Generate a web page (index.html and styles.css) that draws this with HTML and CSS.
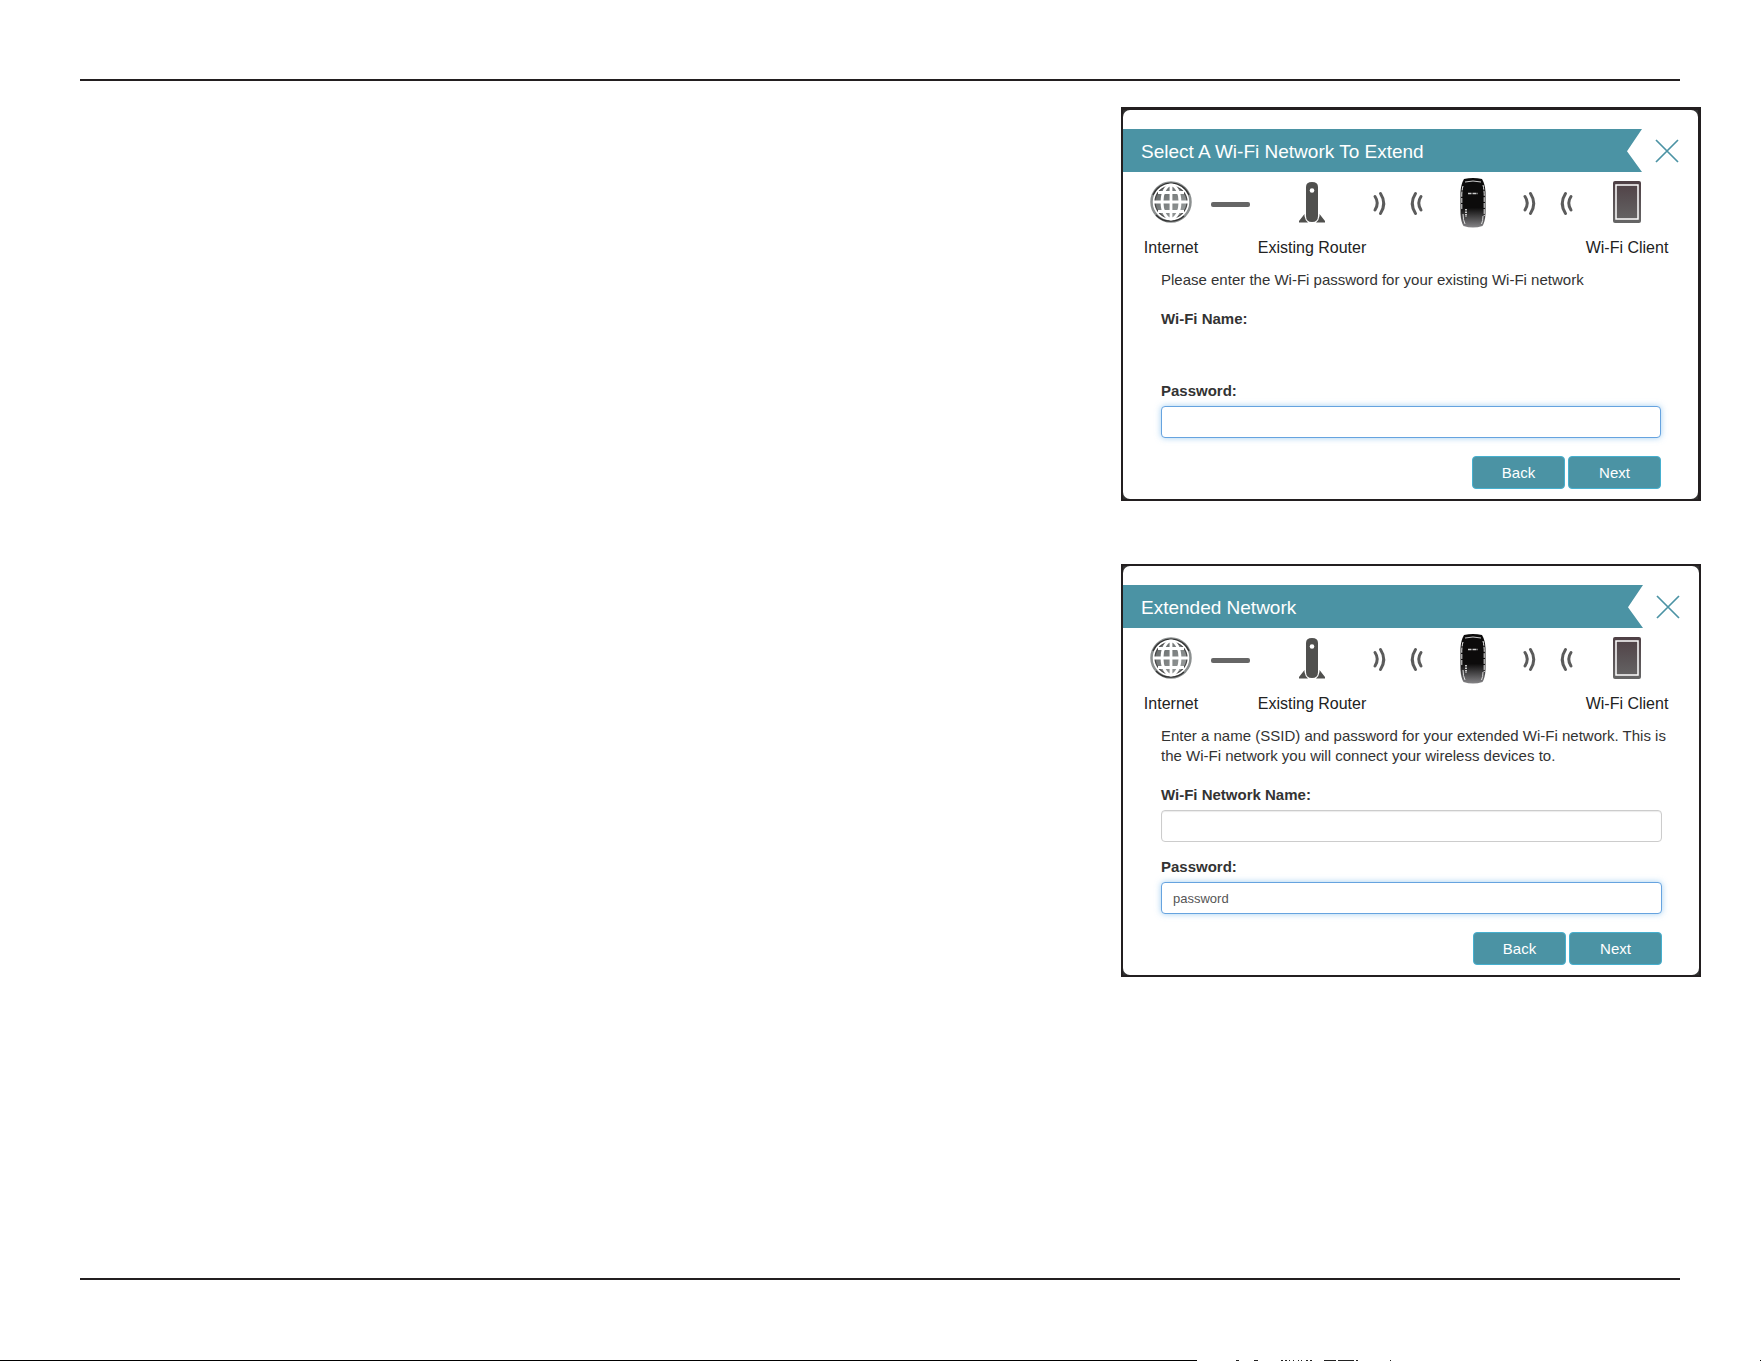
FILE: index.html
```html
<!DOCTYPE html>
<html lang="en">
<head>
    <meta charset="UTF-8">
    <title>Extender Setup</title>
    <link rel="stylesheet" href="styles.css">
</head>
<body>
    <!-- shared icons -->
    <svg class="symbols" aria-hidden="true">
        <linearGradient id="screen" x1="0" y1="0" x2="0" y2="1">
            <stop offset="0" stop-color="#4f4045"/>
            <stop offset="1" stop-color="#666"/>
        </linearGradient>
        <linearGradient id="shell" x1="0" y1="0" x2="0" y2="1">
            <stop offset="0.6" stop-color="#0c0b0b"/>
            <stop offset="1" stop-color="#858487"/>
        </linearGradient>
        <linearGradient id="sea" x1="0" y1="0" x2="1" y2="1">
            <stop offset="0" stop-color="#606464"/>
            <stop offset="1" stop-color="#a0a4a4"/>
        </linearGradient>
        <symbol id="globe" viewBox="0 0 42 50">
            <circle cx="21" cy="24" r="19.500" fill="#fff" stroke="#8b8f8f" stroke-width="2.500"/>
            <path d="M3 17A19.500 19.500 0 0 1 39 17M6 37A20 20 0 0 0 34 38" fill="none" stroke="#333" stroke-width="1.200"/>
            <circle cx="21" cy="24" r="16" fill="url(#sea)" stroke="#444" stroke-width="1.200"/>
            <g fill="none" stroke="#fff" stroke-width="2.800">
                <path d="M21 7V41M4 24H38M8 14.500H34M8 33.500H34"/>
                <ellipse cx="21" cy="24" rx="9" ry="17"/>
            </g>
        </symbol>
        <symbol id="cable" viewBox="0 0 58 50">
            <rect x="12" y="24" width="39" height="5" rx="2" fill="#666"/>
        </symbol>
        <symbol id="router" viewBox="0 0 28 50">
            <path d="M8 9Q8 4 14 4T20 9V38Q20 44 14 44T8 38Z" fill="#50504e"/>
            <circle cx="14" cy="12.500" r="2.300" fill="#fff"/>
            <path d="M6.500 36V38Q7 42 10 44.500H1V43ZM21.500 36V38Q21 42 18 44.500H27V43Z" fill="#50504e"/>
        </symbol>
        <symbol id="signal" viewBox="0 0 52 50">
            <g fill="none" stroke="#5b5b5b" stroke-width="3" stroke-linecap="round">
                <path d="M3 18.500Q7.500 25 3 32M8.500 15.500Q15 25.500 8.500 35.500"/>
                <path d="M49 18.500Q44.500 25 49 32M43.500 15.500Q37 25.500 43.500 35.500"/>
            </g>
        </symbol>
        <symbol id="extender" viewBox="0 0 26 50">
            <path d="M4 1Q13 -1 22 1Q25 6 25.500 14V36Q25 44 22.500 48Q13 51 3.500 48Q1 44 .5 36V14Q1 6 4 1Z" fill="url(#shell)"/>
            <path d="M5 4Q13 2 21 4" fill="none" stroke="#ccc" stroke-width="1"/>
            <path d="M3 8Q1.500 13 1.800 20V32M23 7Q24.500 13 24.200 20V38" fill="none" stroke="#eee" stroke-width="1" stroke-dasharray="5 1"/>
            <path d="M3 36Q3 42 5 46M23 38Q23 43 21.500 46" fill="none" stroke="#ddd" stroke-width="1"/>
            <path d="M8 15.500H18" stroke="#ccc" stroke-width="1.600" stroke-dasharray="3 .5 1 .5"/>
            <path d="M6 31V39" stroke="#fff" stroke-width="1.500" stroke-dasharray="1.500 1"/>
        </symbol>
        <symbol id="tablet" viewBox="0 0 30 50">
            <rect x="1" y="3" width="28" height="42" rx="2" fill="url(#screen)"/>
            <rect x="4" y="7" width="22" height="34" fill="none" stroke="#fff" stroke-width="1.500"/>
        </symbol>
        <symbol id="close" viewBox="0 0 24 24">
            <path d="M1 1L23 23M23 1L1 23" fill="none" stroke="#4b93a4" stroke-width="1.700"/>
        </symbol>
    </svg>

    <main class="page">
        <section class="dialog dialog-select">
            <header class="dialog-header">
                <h2>Select A Wi-Fi Network To Extend</h2>
                <button class="close" type="button" aria-label="Close"><svg><use href="#close"/></svg></button>
            </header>
            <div class="diagram">
                <div class="node"><svg><use href="#globe"/></svg>Internet</div>
                <div class="node"><svg><use href="#cable"/></svg></div>
                <div class="node"><svg><use href="#router"/></svg>Existing Router</div>
                <div class="node"><svg><use href="#signal"/></svg></div>
                <div class="node"><svg><use href="#extender"/></svg></div>
                <div class="node"><svg><use href="#signal"/></svg></div>
                <div class="node"><svg><use href="#tablet"/></svg>Wi-Fi Client</div>
            </div>
            <form>
                <p>Please enter the Wi-Fi password for your existing Wi-Fi network</p>
                <div class="field">
                    <label for="wifi-name">Wi-Fi Name:</label>
                    <output id="wifi-name"></output>
                </div>
                <div class="field">
                    <label for="wifi-password">Password:</label>
                    <input class="active" id="wifi-password" type="text">
                </div>
                <div class="actions">
                    <button type="button">Back</button>
                    <button type="button">Next</button>
                </div>
            </form>
        </section>

        <section class="dialog">
            <header class="dialog-header">
                <h2>Extended Network</h2>
                <button class="close" type="button" aria-label="Close"><svg><use href="#close"/></svg></button>
            </header>
            <div class="diagram">
                <div class="node"><svg><use href="#globe"/></svg>Internet</div>
                <div class="node"><svg><use href="#cable"/></svg></div>
                <div class="node"><svg><use href="#router"/></svg>Existing Router</div>
                <div class="node"><svg><use href="#signal"/></svg></div>
                <div class="node"><svg><use href="#extender"/></svg></div>
                <div class="node"><svg><use href="#signal"/></svg></div>
                <div class="node"><svg><use href="#tablet"/></svg>Wi-Fi Client</div>
            </div>
            <form>
                <p>Enter a name (SSID) and password for your extended Wi-Fi network. This is the Wi-Fi network you will connect your wireless devices to.</p>
                <div class="field">
                    <label for="ext-name">Wi-Fi Network Name:</label>
                    <input id="ext-name" type="text">
                </div>
                <div class="field">
                    <label for="ext-password">Password:</label>
                    <input class="active" id="ext-password" type="text" value="password">
                </div>
                <div class="actions">
                    <button type="button">Back</button>
                    <button type="button">Next</button>
                </div>
            </form>
        </section>
    </main>

    <footer>
        <div class="footer-line"></div>
        <svg class="footer-marks" viewBox="0 0 200 1" aria-hidden="true">
            <path d="M39 .5h3M57 .5h4M84 .5h2M88 .5h2M92 .5h1M96 .5h1M101 .5h1M104 .5h1M109 .5h2M113 .5h2M127 .5h12M141 .5h16M159 .5h2M193 .5h1" stroke="#222"/>
        </svg>
        <div class="footer-end"></div>
    </footer>
</body>
</html>
```
FILE: styles.css
```css
* {
    box-sizing: border-box;
}

body {
    margin: 0;
    min-height: 100vh;
    display: flex;
    flex-direction: column;
    font-family: Arial, "Liberation Sans", sans-serif;
    font-size: 15px;
    line-height: 20px;
    color: #333;
    background-color: #fff;
}

.symbols {
    position: absolute;
    width: 0;
    height: 0;
}

.page {
    flex: 1;
    display: flex;
    flex-direction: column;
    align-items: flex-end;
    gap: 63px;
    margin: 79px 81px 80px 80px;
    padding-top: 26px;
    border-top: 2px solid #231f20;
    border-bottom: 2px solid #231f20;
}

/* Dialogs */
.dialog {
    width: 580px;
    margin-right: -21px;
    border: 2px solid #231f20;
    /* shows in the corners behind the rounded panel */
    background-color: #333;
}

.dialog-select {
    border-top-width: 3px;
    border-right-width: 3px;
}

.dialog-header {
    display: flex;
    align-items: center;
    justify-content: space-between;
    padding-top: 19px;
    padding-right: 19px;
    background-color: #fff;
    border-radius: 7px 7px 0 0;
}

.dialog-header h2 {
    flex: 1;
    margin: 0 13px 0 0;
    padding: 2px 0 0 18px;
    font-size: 19px;
    font-weight: normal;
    line-height: 41px;
    color: #fff;
    background-color: #4b93a4;
    clip-path: polygon(0 0, 100% 0, calc(100% - 15px) 52%, 100% 100%, 0 100%);
}

.close {
    padding: 0;
    border: none;
    background: none;
    cursor: pointer;
}

.close svg {
    display: block;
    width: 24px;
    height: 24px;
}

/* Connection diagram */
.diagram {
    display: grid;
    grid-template-columns: 56px 58px 110px 62px 88px 62px 96px;
    padding: 6px 0 12px 20px;
    font-size: 16px;
    color: #222;
    background-color: #fff;
}

.node {
    display: flex;
    flex-direction: column;
    align-items: center;
    gap: 10px;
    white-space: nowrap;
}

.node svg {
    display: block;
    width: 100%;
    height: 50px;
}

/* Forms */
form {
    padding: 0 37px 10px 38px;
    background-color: #fff;
    border-radius: 0 0 7px 7px;
}

form p {
    margin: 0 -10px 19px 0;
}

.field {
    margin-bottom: 15px;
}

.field label {
    display: block;
    margin-bottom: 5px;
    font-weight: bold;
}

.field input,
.field output {
    display: block;
    width: 100%;
    height: 32px;
}

.field input {
    padding: 0 11px;
    font-family: inherit;
    font-size: 13px;
    color: #555;
    background-color: #fff;
    border: 1px solid #ccc;
    border-radius: 4px;
    box-shadow: inset 0 1px 1px rgba(0, 0, 0, 0.08);
}

.field input.active {
    border-color: #66a3df;
    box-shadow: 0 0 6px rgba(102, 175, 233, 0.6);
}

.actions {
    display: flex;
    justify-content: flex-end;
    gap: 3px;
    padding-top: 3px;
}

.actions button {
    width: 93px;
    height: 33px;
    padding: 0;
    font-family: inherit;
    font-size: 15px;
    color: #fff;
    background-color: #4b93a4;
    border: 1px solid #46b0cf;
    border-radius: 4px;
    cursor: pointer;
}

/* Bottom edge */
footer {
    display: flex;
    height: 1px;
}

.footer-line {
    width: 68%;
    background-color: #000;
}

.footer-marks {
    width: 200px;
    height: 1px;
}

.footer-end {
    width: 1px;
    margin-left: auto;
    background-color: #000;
}
```
